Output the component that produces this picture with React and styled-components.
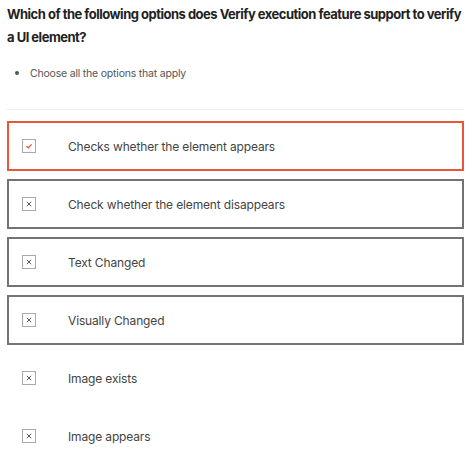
import React from "react";
import styled, { createGlobalStyle } from "styled-components";

const Global = createGlobalStyle`
  html, body { margin: 0; padding: 0; background: #fff; }
  body { font-family: Inter, "Noto Sans", sans-serif; }
`;

const Page = styled.div`
  width: 457px;
  padding: 0 0 0 7px;
`;

const Title = styled.h1`
  margin: 0 -3px 0 0;
  padding-top: 3px;
  font-size: 13px;
  font-weight: 700;
  line-height: 23px;
  color: #222;
  letter-spacing: -0.5px;
`;

const Hints = styled.ul`
  margin: 16px 0 0 0;
  padding: 0 0 0 23px;
  font-size: 10.5px;
  line-height: 16px;
  letter-spacing: -0.2px;
  color: #555;
  li::marker { font-size: 12px; }
`;

const Divider = styled.hr`
  margin: 27px 0 11px;
  border: 0;
  border-top: 1px solid #eee;
`;

const Options = styled.div`
  display: flex;
  flex-direction: column;
  gap: 8px;
`;

const Option = styled.div`
  box-sizing: border-box;
  height: 50px;
  display: flex;
  align-items: center;
  padding-left: 13px;
  border: 2px solid ${(p) => (p.$state === "selected" ? "#e9573b" : p.$state === "plain" ? "transparent" : "#737373")};
`;

const Box = styled.span`
  box-sizing: border-box;
  width: 14px;
  height: 14px;
  border: 1px solid #aaa;
  display: flex;
  align-items: center;
  justify-content: center;
  margin-right: 32px;
`;

const Label = styled.span`
  font-size: 12px;
  letter-spacing: -0.15px;
  color: #444;
`;

const Check = () => (
  <svg width="8" height="8" viewBox="0 0 8 8">
    <path d="M1.5 4.2 L3.2 5.8 L6.6 2.4" fill="none" stroke="#e9573b" strokeWidth="1.3" />
  </svg>
);

const Cross = () => (
  <svg width="8" height="8" viewBox="0 0 8 8">
    <path d="M1.8 1.8 L6.2 6.2 M6.2 1.8 L1.8 6.2" fill="none" stroke="#555" strokeWidth="1" />
  </svg>
);

const options = [
  { text: "Checks whether the element appears", state: "selected" },
  { text: "Check whether the element disappears", state: "bordered" },
  { text: "Text Changed", state: "bordered" },
  { text: "Visually Changed", state: "bordered" },
  { text: "Image exists", state: "plain" },
  { text: "Image appears", state: "plain" },
];

export default function App() {
  return (
    <>
      <Global />
      <Page>
        <Title>
          Which of the following options does Verify execution feature support to verify a UI element?
        </Title>
        <Hints>
          <li>Choose all the options that apply</li>
        </Hints>
        <Divider />
        <Options>
          {options.map((o) => (
            <Option key={o.text} $state={o.state}>
              <Box>{o.state === "selected" ? <Check /> : <Cross />}</Box>
              <Label>{o.text}</Label>
            </Option>
          ))}
        </Options>
      </Page>
    </>
  );
}
